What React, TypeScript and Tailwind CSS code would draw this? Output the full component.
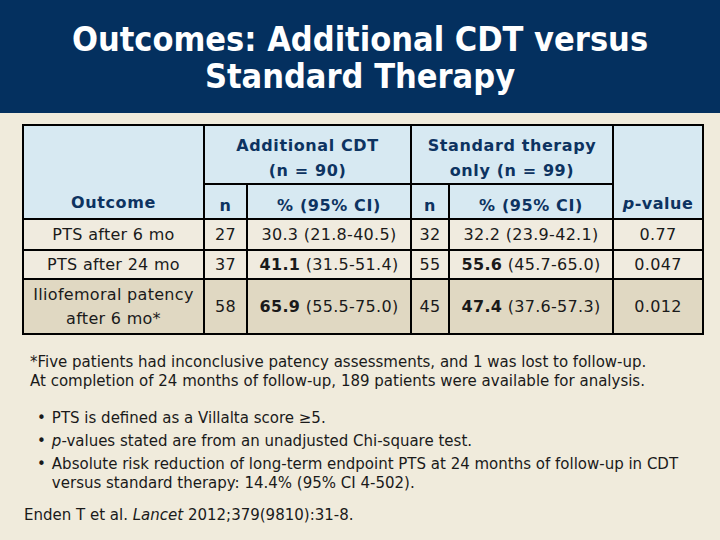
import React from 'react';

const verdana = { fontFamily: '"DejaVu Sans", Verdana, sans-serif' };
const tahoma = { fontFamily: '"DejaVu Sans Condensed", "DejaVu Sans", Tahoma, sans-serif' };

const rows = [
  { outcome: 'PTS after 6 mo', n1: '27', p1: '30.3', ci1: '(21.8-40.5)', n2: '32', p2: '32.2', ci2: '(23.9-42.1)', pv: '0.77', bold: false },
  { outcome: 'PTS after 24 mo', n1: '37', p1: '41.1', ci1: '(31.5-51.4)', n2: '55', p2: '55.6', ci2: '(45.7-65.0)', pv: '0.047', bold: true },
];

export default function App() {
  return (
    <div className="w-[720px] h-[540px] bg-[#f0ebdc] overflow-hidden">
      {/* title band */}
      <div className="h-[113px] bg-[#04305f] flex items-center justify-center">
        <h1
          className="text-white text-[34px] font-bold leading-[37px] text-center pt-[2px]"
          style={tahoma}
        >
          Outcomes: Additional CDT versus
          <br />
          Standard Therapy
        </h1>
      </div>

      <div className="pt-[11px] pl-[22px]">
        <table
          className="w-[680px] table-fixed border-collapse border-2 border-black text-[16px] tracking-[0.3px] text-[#1a1a1a]"
          style={verdana}
        >
          <colgroup>
            <col className="w-[181px]" />
            <col className="w-[43px]" />
            <col className="w-[164px]" />
            <col className="w-[38px]" />
            <col className="w-[164px]" />
            <col className="w-[90px]" />
          </colgroup>
          <thead className="bg-[#d7e9f2] text-[#0d3361] font-bold tracking-[0.6px]">
            <tr className="h-[59px]">
              <th rowSpan={2} className="border-2 border-black align-bottom pb-[3px]">
                Outcome
              </th>
              <th colSpan={2} className="border-2 border-black leading-[25px] pt-[6px]">
                Additional CDT
                <br />
                (n = 90)
              </th>
              <th colSpan={2} className="border-2 border-black leading-[25px] pt-[6px]">
                Standard therapy
                <br />
                only (n = 99)
              </th>
              <th rowSpan={2} className="border-2 border-black align-bottom pb-[2px] tracking-[0.5px]">
                <span className="italic">p</span>-value
              </th>
            </tr>
            <tr className="h-[35px]">
              <th className="border-2 border-black pt-[8px]">n</th>
              <th className="border-2 border-black pt-[8px]">% (95% CI)</th>
              <th className="border-2 border-black pt-[8px]">n</th>
              <th className="border-2 border-black pt-[8px]">% (95% CI)</th>
            </tr>
          </thead>
          <tbody>
            {rows.map((r, i) => (
              <tr key={r.outcome} className={`bg-[#f0ebdf] ${i === 0 ? 'h-[31px]' : 'h-[29px]'}`}>
                <td className="border-2 border-black text-center">{r.outcome}</td>
                <td className="border-2 border-black text-center">{r.n1}</td>
                <td className="border-2 border-black text-center">
                  <span className={r.bold ? 'font-bold' : ''}>{r.p1}</span> {r.ci1}
                </td>
                <td className="border-2 border-black text-center">{r.n2}</td>
                <td className="border-2 border-black text-center">
                  <span className={r.bold ? 'font-bold' : ''}>{r.p2}</span> {r.ci2}
                </td>
                <td className="border-2 border-black text-center">{r.pv}</td>
              </tr>
            ))}
            <tr className="h-[55px] bg-[#e0d8c2]">
              <td className="border-2 border-black text-center leading-[24px]">
                Iliofemoral patency
                <br />
                after 6 mo*
              </td>
              <td className="border-2 border-black text-center">58</td>
              <td className="border-2 border-black text-center">
                <span className="font-bold">65.9</span> (55.5-75.0)
              </td>
              <td className="border-2 border-black text-center">45</td>
              <td className="border-2 border-black text-center">
                <span className="font-bold">47.4</span> (37.6-57.3)
              </td>
              <td className="border-2 border-black text-center">0.012</td>
            </tr>
          </tbody>
        </table>
      </div>

      <div className="text-[15px] leading-[19px] text-[#1a1a1a]" style={verdana}>
        <p className="pl-[30px] pt-[18px]">
          *Five patients had inconclusive patency assessments, and 1 was lost to follow-up.
          <br />
          At completion of 24 months of follow-up, 189 patients were available for analysis.
        </p>

        <ul className="pl-[37px] pr-[10px] pt-[18px] flex flex-col gap-[4px]">
          <li className="flex gap-[6px]">
            <span>•</span>
            <span>PTS is defined as a Villalta score ≥5.</span>
          </li>
          <li className="flex gap-[6px]">
            <span>•</span>
            <span>
              <span className="italic">p</span>-values stated are from an unadjusted Chi-square test.
            </span>
          </li>
          <li className="flex gap-[6px]">
            <span>•</span>
            <span>
              Absolute risk reduction of long-term endpoint PTS at 24 months of follow-up in CDT
              <br />
              versus standard therapy: 14.4% (95% CI 4-502).
            </span>
          </li>
        </ul>

        <p className="pl-[24px] pt-[13px]">
          Enden T et al. <span className="italic">Lancet</span> 2012;379(9810):31-8.
        </p>
      </div>
    </div>
  );
}
